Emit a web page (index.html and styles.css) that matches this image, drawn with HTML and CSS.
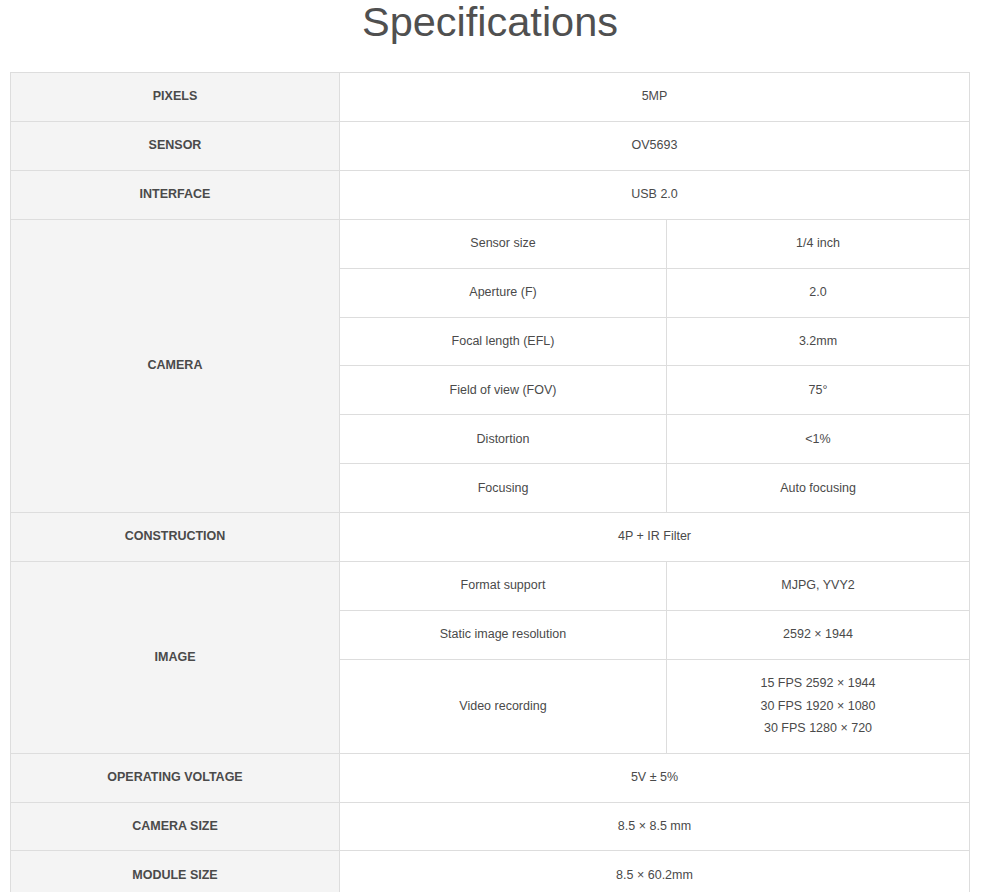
FILE: index.html
```html
<!DOCTYPE html>
<html>
<head>
<meta charset="utf-8">
<link rel="stylesheet" href="styles.css">
</head>
<body>
<div class="page">
  <h1 class="title">Specifications</h1>
  <table class="spec">
    <colgroup>
      <col class="c1"><col class="c2"><col class="c3">
    </colgroup>
    <tbody>
      <tr><th>PIXELS</th><td colspan="2">5MP</td></tr>
      <tr><th>SENSOR</th><td colspan="2">OV5693</td></tr>
      <tr><th>INTERFACE</th><td colspan="2">USB 2.0</td></tr>
      <tr><th rowspan="6">CAMERA</th><td>Sensor size</td><td>1/4 inch</td></tr>
      <tr><td>Aperture (F)</td><td>2.0</td></tr>
      <tr><td>Focal length (EFL)</td><td>3.2mm</td></tr>
      <tr><td>Field of view (FOV)</td><td>75°</td></tr>
      <tr><td>Distortion</td><td>&lt;1%</td></tr>
      <tr><td>Focusing</td><td>Auto focusing</td></tr>
      <tr><th>CONSTRUCTION</th><td colspan="2">4P + IR Filter</td></tr>
      <tr><th rowspan="3">IMAGE</th><td>Format support</td><td>MJPG, YVY2</td></tr>
      <tr><td>Static image resolution</td><td>2592 × 1944</td></tr>
      <tr><td>Video recording</td><td>15 FPS 2592 × 1944<br>30 FPS 1920 × 1080<br>30 FPS 1280 × 720</td></tr>
      <tr><th>OPERATING VOLTAGE</th><td colspan="2">5V ± 5%</td></tr>
      <tr><th>CAMERA SIZE</th><td colspan="2">8.5 × 8.5 mm</td></tr>
      <tr><th>MODULE SIZE</th><td colspan="2">8.5 × 60.2mm</td></tr>
    </tbody>
  </table>
</div>
</body>
</html>
```

FILE: styles.css
```css
html, body {
  margin: 0;
  padding: 0;
  background: #fff;
}
.page {
  padding: 0 11px 0 10px;
  font-family: "Liberation Sans", Arial, sans-serif;
  color: #4d4d4d;
}
.title {
  margin: 0;
  height: 72px;
  line-height: 44px;
  font-size: 41.5px;
  font-weight: normal;
  text-align: center;
  color: #505050;
}
.spec {
  width: 959px;
  border-collapse: collapse;
  table-layout: fixed;
  font-size: 12.5px;
}
.c1 { width: 329px; }
.c2 { width: 327px; }
.c3 { width: 303px; }
.spec th, .spec td {
  border: 1px solid #dddddd;
  padding: 12.25px 8px 13.25px;
  line-height: 22.4px;
  text-align: center;
  vertical-align: middle;
  color: #4a4a4a;
}
.spec th {
  background: #f4f4f4;
  font-weight: bold;
}
.spec td {
  background: #fff;
}
```
